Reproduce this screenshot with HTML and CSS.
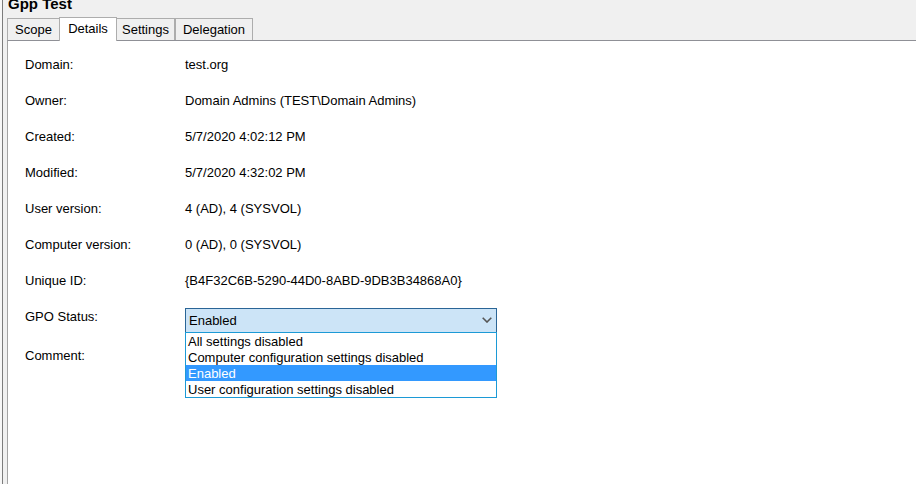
FILE: index.html
```html
<!DOCTYPE html>
<html>
<head>
<meta charset="utf-8">
<link rel="stylesheet" href="styles.css">
</head>
<body>
<div class="app">
  <h1 class="title">Gpp Test</h1>
  <div class="tabs">
    <div class="tab tab-scope">Scope</div>
    <div class="tab tab-details active">Details</div>
    <div class="tab tab-settings">Settings</div>
    <div class="tab tab-delegation">Delegation</div>
  </div>
  <div class="panel">
    <div class="grid">
      <div class="label">Domain:</div><div class="value">test.org</div>
      <div class="label">Owner:</div><div class="value">Domain Admins (TEST\Domain Admins)</div>
      <div class="label">Created:</div><div class="value">5/7/2020 4:02:12 PM</div>
      <div class="label">Modified:</div><div class="value">5/7/2020 4:32:02 PM</div>
      <div class="label">User version:</div><div class="value">4 (AD), 4 (SYSVOL)</div>
      <div class="label">Computer version:</div><div class="value">0 (AD), 0 (SYSVOL)</div>
      <div class="label">Unique ID:</div><div class="value">{B4F32C6B-5290-44D0-8ABD-9DB3B34868A0}</div>
      <div class="label">GPO Status:</div>
      <div class="combo-wrap">
        <div class="combo">
          <span>Enabled</span>
          <svg class="chev" width="10" height="6" viewBox="0 0 10 6"><path d="M0.7 0.7 L5 5 L9.3 0.7" fill="none" stroke="#555" stroke-width="1.6"/></svg>
        </div>
        <ul class="dropdown">
          <li>All settings disabled</li>
          <li>Computer configuration settings disabled</li>
          <li class="sel">Enabled</li>
          <li>User configuration settings disabled</li>
        </ul>
      </div>
      <div class="label comment">Comment:</div><div class="value comment"></div>
    </div>
  </div>
</div>
</body>
</html>
```
FILE: styles.css
```css
html, body {
  margin: 0;
  padding: 0;
  height: 100%;
  overflow: hidden;
}
body {
  background: #f7f7f7;
  font-family: "Liberation Sans", Arial, sans-serif;
  font-size: 13px;
  color: #000;
}
.app {
  margin-left: 2px;
  border-left: 1px solid #7c7c7c;
  background: #f0f0f0;
  padding-left: 4px;
  height: 484px;
  display: flex;
  flex-direction: column;
}
.title {
  margin: -5px 0 0 1px;
  height: 17px;
  line-height: 17px;
  font-size: 15px;
  font-weight: bold;
}
.tabs {
  margin-top: 5px;
  height: 23px;
  display: flex;
  align-items: flex-end;
  position: relative;
  z-index: 2;
}
.tab {
  box-sizing: border-box;
  height: 22px;
  border: 1px solid #adadad;
  border-bottom: none;
  line-height: 20px;
  padding-top: 1px;
  text-align: center;
  background: #f0f0f0;
}
.tab.active {
  height: 24px;
  margin-bottom: -1px;
  background: #fff;
  border-color: #adadad;
}
.tab-scope { width: 53px; }
.tab-details { width: 58px; margin-left: -1px; }
.tab-settings { width: 59px; margin-left: -1px; }
.tab-delegation { width: 78px; }
.panel {
  flex: 1;
  background: #fff;
  border-top: 1px solid #8f9096;
  border-left: 1px solid #a3a3a3;
  padding: 16px 0 0 17px;
}
.grid {
  display: grid;
  grid-template-columns: 160px 312px;
  row-gap: 20px;
  line-height: 16px;
  align-items: start;
}
.comment { margin-top: -5px; }
.combo-wrap {
  position: relative;
  margin-top: -1px;
}
.combo {
  box-sizing: border-box;
  height: 25px;
  border: 1px solid #2a6596;
  background: #cce4f7;
  padding: 4px 4px 0 3px;
  display: flex;
  justify-content: space-between;
  align-items: flex-start;
}
.chev {
  margin-top: 4px;
}
.dropdown {
  position: absolute;
  left: 0;
  top: 24px;
  width: 312px;
  box-sizing: border-box;
  margin: 0;
  padding: 0;
  list-style: none;
  background: #fff;
  border: 1px solid #1c9ad6;
  z-index: 5;
}
.dropdown li {
  height: 16px;
  line-height: 18px;
  padding-left: 2px;
  overflow: hidden;
}
.dropdown li.sel {
  background: #3399ff;
  color: #fff;
}
```
